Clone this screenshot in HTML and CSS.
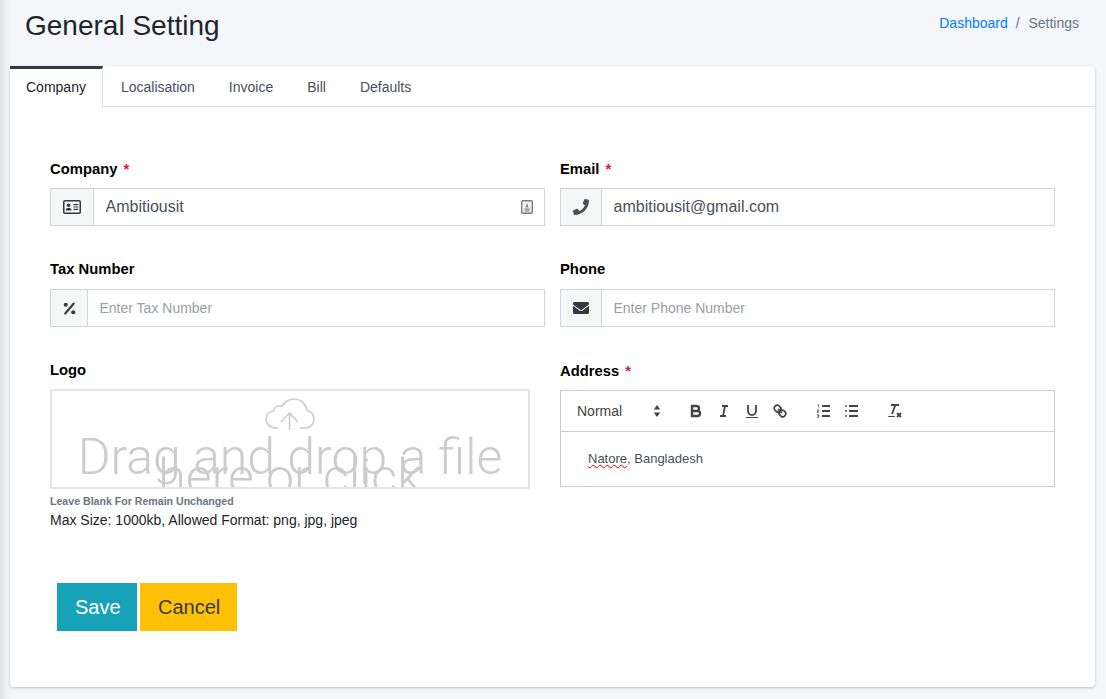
FILE: index.html
```html
<!DOCTYPE html>
<html>
<head>
    <title>General Setting</title>
    <link rel="stylesheet" href="styles.css">
</head>
<body>
    <div class="page-header">
        <h1>General Setting</h1>
        <div class="breadcrumb">
            <a href="#">Dashboard</a>
            <span class="divider">/</span>
            <span class="current">Settings</span>
        </div>
    </div>

    <div class="card">
        <ul class="tabs">
            <li class="tab active">Company</li>
            <li class="tab">Localisation</li>
            <li class="tab">Invoice</li>
            <li class="tab">Bill</li>
            <li class="tab">Defaults</li>
        </ul>

        <form class="card-body">
            <div class="form-grid">
                <div class="form-group">
                    <label>Company <span class="req">*</span></label>
                    <div class="input-group">
                        <span class="addon addon-wide">
                            <svg class="icon-card" viewBox="0 0 18 14">
                                <rect x="0.75" y="0.75" width="16.5" height="12.5" rx="1" fill="none" stroke="#343a40" stroke-width="1.5"/>
                                <circle cx="5.6" cy="5.3" r="1.8" fill="#343a40"/>
                                <path d="M2.7 10.6c0-1.9 1.2-2.8 2.9-2.8s2.9.9 2.9 2.8z" fill="#343a40"/>
                                <path d="M10.5 4.6h4.8M10.5 7h4.8M10.5 9.4h4.8" stroke="#343a40" stroke-width="1.1"/>
                            </svg>
                        </span>
                        <div class="field">
                            <input class="text-input" type="text" value="Ambitiousit">
                            <svg class="autofill" viewBox="0 0 12 14">
                                <rect x="0.7" y="0.7" width="10.6" height="12.6" rx="1" fill="#f2f2f2" stroke="#7d7d7d" stroke-width="1.4"/>
                                <path d="M6 3l1.5 4.5h-3zM3.5 8.5h5v1.2h-5zM3.5 10.5h5v1h-5z" fill="#7d7d7d"/>
                            </svg>
                        </div>
                    </div>
                </div>

                <div class="form-group">
                    <label>Email <span class="req">*</span></label>
                    <div class="input-group">
                        <span class="addon">
                            <svg class="icon" viewBox="0 0 512 512"><path fill="#495057" d="M493.4 24.6l-104-24c-11.3-2.6-22.9 3.3-27.5 13.9l-48 112c-4.2 9.8-1.4 21.3 6.9 28l60.6 49.6c-36 76.7-98.9 140.5-177.2 177.2l-49.6-60.6c-6.8-8.3-18.2-11.1-28-6.9l-112 48C3.9 366.5-2 378.1.6 389.4l24 104C27.1 504.2 36.7 512 48 512c256.1 0 464-207.5 464-464 0-11.2-7.7-20.9-18.6-23.4z"/></svg>
                        </span>
                        <input class="text-input" type="text" value="ambitiousit@gmail.com">
                    </div>
                </div>

                <div class="form-group second-row">
                    <label>Tax Number</label>
                    <div class="input-group">
                        <span class="addon addon-narrow">
                            <svg class="icon-percent" viewBox="0 0 14 14">
                                <path d="M11.6 1.6L2.4 12.4" stroke="#343a40" stroke-width="2.2" stroke-linecap="round"/>
                                <circle cx="3" cy="3" r="2.2" fill="#343a40"/>
                                <circle cx="11" cy="11" r="2.2" fill="#343a40"/>
                            </svg>
                        </span>
                        <input class="text-input" type="text" placeholder="Enter Tax Number">
                    </div>
                </div>

                <div class="form-group second-row">
                    <label>Phone</label>
                    <div class="input-group">
                        <span class="addon">
                            <svg class="icon" viewBox="0 0 512 512"><path fill="#343a40" d="M502.3 190.8c3.9-3.1 9.7-.2 9.7 4.7V400c0 26.5-21.5 48-48 48H48c-26.5 0-48-21.5-48-48V195.6c0-5 5.7-7.8 9.7-4.7 22.4 17.4 52.1 39.5 154.1 113.6 21.1 15.4 56.7 47.8 92.2 47.6 35.7.3 72-32.8 92.3-47.6 102-74.1 131.6-96.3 154-113.7zM256 320c23.2.4 56.6-29.2 73.4-41.4 132.7-96.3 142.8-104.7 173.4-128.7 5.8-4.5 9.2-11.5 9.2-18.9v-19c0-26.5-21.5-48-48-48H48C21.5 64 0 85.5 0 112v19c0 7.4 3.4 14.3 9.2 18.9 30.6 23.9 40.7 32.4 173.4 128.7 16.8 12.2 50.2 41.8 73.4 41.4z"/></svg>
                        </span>
                        <input class="text-input" type="text" placeholder="Enter Phone Number">
                    </div>
                </div>

                <div class="form-group">
                    <label>Logo</label>
                    <div class="dropzone">
                        <svg class="cloud" viewBox="0 0 50 34">
                            <path d="M13 30H10C5 30 1 26 1 21.5 1 17 4 13.5 8.5 13 9.5 9 13 7 17 8 20 3.5 24 1 29 1c7 0 12 5 13 11.5 4.5 1 7 4.5 7 9 0 5-4 8.5-9 8.5H35" fill="none" stroke="#ccc" stroke-width="1.6"/>
                            <path d="M24.500 32V15M16 24l8.500-9 8.500 9" fill="none" stroke="#ccc" stroke-width="1.6"/>
                        </svg>
                        <p class="drop-text">Drag and drop a file here or click</p>
                    </div>
                    <small class="help">Leave Blank For Remain Unchanged</small>
                    <p class="limits">Max Size: 1000kb, Allowed Format: png, jpg, jpeg</p>
                </div>

                <div class="form-group address">
                    <label>Address <span class="req">*</span></label>
                    <div class="editor">
                        <div class="toolbar">
                            <span class="picker">
                                Normal
                                <svg class="ql" viewBox="0 0 18 18"><path d="M9 3l3.200 4.600H5.800zM9 15l-3.200-4.600h6.400z" fill="#444"/></svg>
                            </span>
                            <span class="tool-set">
                                <svg class="ql" viewBox="0 0 18 18"><path class="ql-line ql-thick" d="M5 4h4.500a2.500 2.500 0 0 1 0 5H5zM5 9h5.500a2.500 2.500 0 0 1 0 5H5z"/></svg>
                                <svg class="ql" viewBox="0 0 18 18"><path class="ql-line" d="M7 4h6M5 14h6M8 14l2-10"/></svg>
                                <svg class="ql" viewBox="0 0 18 18"><path class="ql-line" d="M5 3v6a4 4 0 0 0 8 0V3"/><rect x="3" y="15" width="12" height="1" fill="#444"/></svg>
                                <svg class="ql" viewBox="0 0 18 18"><path class="ql-line" d="M7 7l4 4M8.900 4.577a3.476 3.476 0 0 1 .36 4.679A3.476 3.476 0 0 1 4.577 8.900C3.185 7.500 2.035 6.400 4.217 4.217S7.500 3.185 8.900 4.577zM13.423 9.100a3.476 3.476 0 0 0-4.679-.36 3.476 3.476 0 0 0 .36 4.679c1.392 1.392 2.500 2.542 4.679.36S14.815 10.500 13.423 9.100z"/></svg>
                            </span>
                            <span class="tool-set">
                                <svg class="ql" viewBox="0 0 18 18"><path class="ql-line" d="M7 4h8M7 9h8M7 14h8"/><path d="M2.500 2.500h1v3M2 8h1.800v1.200H2.200v1.200H4M2 12.700h1.800v1.200H2.600h1.200v1.400H2" fill="none" stroke="#444" stroke-width="0.7"/></svg>
                                <svg class="ql" viewBox="0 0 18 18"><path class="ql-line" d="M6 4h9M6 9h9M6 14h9"/><path class="ql-line" d="M3 4h0.010M3 9h0.010M3 14h0.010" stroke-linecap="round"/></svg>
                            </span>
                            <span class="tool-set tool-clean">
                                <svg class="ql" viewBox="0 0 18 18"><path class="ql-line" d="M5 3h8M6 12l3.350-9M11 11l4 4M15 11l-4 4"/><rect x="2" y="14" width="7" height="1" rx="0.500" fill="#444"/></svg>
                            </span>
                        </div>
                        <div class="editor-body"><span class="misspelt">Natore</span>, Bangladesh</div>
                    </div>
                </div>
            </div>

            <div class="form-actions">
                <button class="btn btn-save" type="button">Save</button>
                <button class="btn btn-cancel" type="button">Cancel</button>
            </div>
        </form>
    </div>
</body>
</html>
```

FILE: styles.css
```css
* {
    box-sizing: border-box;
}
html, body {
    height: 100%;
}
body {
    margin: 0;
    padding: 0 11px 12px 10px;
    overflow: hidden;
    background: linear-gradient(to right, #dee0e3 0, #f4f6f9 10px);
    font-family: "Liberation Sans", Arial, sans-serif;
    font-size: 14px;
    color: #212529;
}
.page-header {
    display: flex;
    justify-content: space-between;
    height: 66px;
    padding: 8px 16px 0 15px;
}
.page-header h1 {
    margin: 0;
    font-size: 28px;
    font-weight: 400;
    line-height: 36px;
}
.breadcrumb {
    padding-top: 5px;
    line-height: 21px;
    color: #6c757d;
}
.breadcrumb a {
    color: #007bff;
    text-decoration: none;
}
.divider {
    margin: 0 5px 0 4px;
}
.card {
    height: 621px;
    background: #fff;
    border-radius: 4px;
    box-shadow: 0 0 1px rgba(0, 0, 0, .125), 0 1px 3px rgba(0, 0, 0, .2);
}
.tabs {
    display: flex;
    height: 41px;
    margin: 0;
    padding: 0;
    list-style: none;
    border-bottom: 1px solid #dee2e6;
}
.tab {
    height: 40px;
    padding: 11px 16px 0;
    margin-right: 2px;
    color: #495057;
    line-height: 21px;
}
.tab.active {
    height: 41px;
    margin-right: 2px;
    padding-top: 8px;
    color: #212529;
    border-top: 3px solid #343a40;
    border-right: 1px solid #dee2e6;
    background: #fff;
}
.card-body {
    padding: 52px 40px 0;
}
.form-grid {
    display: grid;
    grid-template-columns: 1fr 1fr;
    column-gap: 15px;
}
.form-group {
    margin-bottom: 33px;
}
label {
    display: block;
    margin-bottom: 8px;
    font-size: 14.8px;
    font-weight: 700;
    line-height: 21px;
    color: #000;
}
.second-row label {
    margin-bottom: 9px;
}
.req {
    margin-left: 2px;
    color: #dc143c;
}
.input-group {
    display: flex;
    height: 38px;
    border: 1px solid #ced4da;
    background: #fff;
}
.addon {
    display: flex;
    flex: 0 0 41px;
    align-items: center;
    justify-content: center;
    background: #f5f7f7;
    border-right: 1px solid #ced4da;
}
.addon-wide {
    flex-basis: 43px;
}
.addon-narrow {
    flex-basis: 37px;
}
.icon {
    width: 16px;
    height: 16px;
}
.icon-card {
    width: 18px;
    height: 14px;
}
.icon-percent {
    width: 13px;
    height: 13px;
}
.field {
    position: relative;
    display: flex;
    flex: 1;
}
.autofill {
    position: absolute;
    top: 11px;
    right: 11px;
    width: 12px;
    height: 14px;
}
.text-input {
    flex: 1;
    width: 100%;
    padding: 0 11.5px;
    border: 0;
    outline: 0;
    font-family: inherit;
    font-size: 16px;
    color: #495057;
}
.text-input::placeholder {
    font-size: 14px;
    color: #999ea5;
}
.dropzone {
    width: 480px;
    height: 100px;
    overflow: hidden;
    text-align: center;
    border: 2px solid #e5e5e5;
}
.cloud {
    display: block;
    width: 50px;
    height: 34px;
    margin: 7px auto 0;
}
.drop-text {
    margin: -4px 0 0;
    padding-top: 19px;
    font-family: Roboto, sans-serif;
    font-size: 50px;
    font-weight: 300;
    line-height: 20px;
    color: #ccc;
}
.help {
    display: block;
    margin-top: 7px;
    font-size: 10.6px;
    font-weight: 700;
    line-height: 11px;
    color: #6c757d;
}
.limits {
    margin: 5px 0 0;
    line-height: 16px;
    color: #212529;
}
.address label {
    padding-top: 1px;
}
.editor {
    height: 97px;
    border: 1px solid #ccc;
}
.toolbar {
    display: flex;
    align-items: center;
    height: 41px;
    padding: 0 8px;
    border-bottom: 1px solid #ccc;
    color: #444;
}
.picker {
    display: flex;
    align-items: center;
    justify-content: space-between;
    width: 97px;
    padding-left: 8px;
}
.tool-set {
    display: flex;
    margin-left: 16px;
}
.tool-clean {
    margin-left: 15px;
}
.ql {
    width: 18px;
    height: 18px;
    margin: 0 5px;
}
.picker .ql {
    margin: 0;
}
.ql-line {
    fill: none;
    stroke: #444;
    stroke-width: 1.8;
}
.ql-thick {
    stroke-width: 2.4;
}
.editor-body {
    padding: 19px 27px;
    font-size: 13px;
    line-height: 16px;
    color: #495057;
}
.misspelt {
    text-decoration: underline wavy #e00;
    text-decoration-thickness: 1px;
}
.form-actions {
    display: flex;
    gap: 3px;
    margin-top: 22px;
    margin-left: 7px;
}
.btn {
    height: 48px;
    padding: 0 18px;
    border: 0;
    font-family: inherit;
    font-size: 20px;
    line-height: 30px;
}
.btn-save {
    width: 80px;
    padding-right: 20px;
    background: #17a2b8;
    color: #fff;
}
.btn-cancel {
    width: 97px;
    background: #ffc107;
    color: #343a40;
}
```
